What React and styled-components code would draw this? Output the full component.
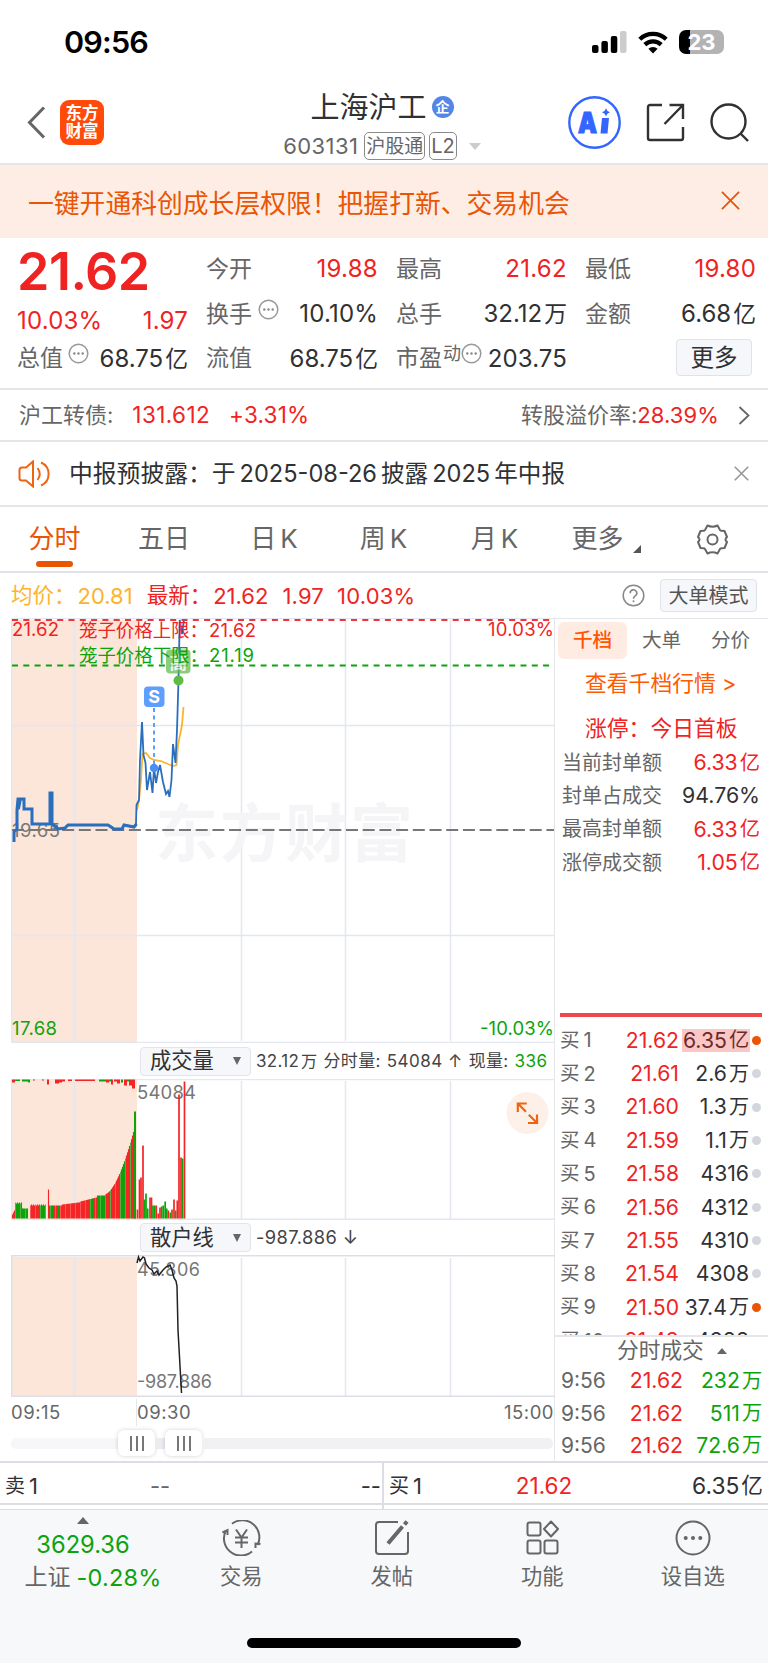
import React from "react";
import styled, { createGlobalStyle } from "styled-components";

const RED = "#f02323";
const GREEN = "#0ca30c";
const ORANGE = "#ea5504";
const LINE = "#e4e6ea";

const GlobalStyle = createGlobalStyle`
  * {
    box-sizing: border-box;
  }
  body {
    margin: 0;
    background: #fff;
    color: #303133;
    font-family: Inter, "Noto Sans CJK SC", sans-serif;
    font-size: 23px;
    line-height: 1;
  }
`;

const Page = styled.div`
  display: flex;
  flex-direction: column;
  width: 768px;
  height: 1663px;
  overflow: hidden;
  white-space: nowrap;
`;

const T = styled.span`
  display: inline-flex;
  align-items: center;
  color: ${(p) => p.$c || "inherit"};
  font-size: ${(p) => p.$s || 23}px;
  font-weight: ${(p) => p.$w || 400};
  letter-spacing: ${(p) => p.$ls || 0}px;
  margin-left: ${(p) => p.$ml || 0}px;
`;

const Unit = styled.span`
  margin-left: 2px;
  font-size: 0.95em;
`;

// number with an optional 万 / 亿 suffix
const Num = ({ children, ...rest }) => {
  const m = String(children).match(/^(.*?)([万亿]?)$/);
  return (
    <T {...rest}>
      {m[1]}
      {m[2] && <Unit>{m[2]}</Unit>}
    </T>
  );
};

/* ---------- status bar ---------- */

const StatusBar = styled.div`
  height: 84px;
  display: flex;
  align-items: center;
  justify-content: space-between;
  padding: 0 44px 0 64px;
`;

const StatusIcons = styled.div`
  display: flex;
  align-items: center;
  gap: 11px;
`;

const Battery = styled.div`
  width: 45px;
  height: 24px;
  border-radius: 7px;
  background: linear-gradient(90deg, #000 24%, #b3b3b3 24%);
  color: #fff;
  font-size: 22px;
  font-weight: 700;
  display: flex;
  align-items: center;
  justify-content: center;
`;

/* ---------- header ---------- */

const Header = styled.div`
  height: 81px;
  display: grid;
  grid-template-columns: 1fr auto 1fr;
  padding: 0 19px 0 27px;
  border-bottom: 2px solid ${LINE};
`;

const HeaderLeft = styled.div`
  display: flex;
  align-items: center;
  gap: 14px;
  padding-bottom: 3px;
`;

const Logo = styled.div`
  width: 44px;
  height: 45px;
  border-radius: 9px;
  background: #ff4a0a;
  color: #fff;
  display: flex;
  flex-direction: column;
  align-items: center;
  justify-content: center;
  font-size: 16.5px;
  font-weight: 700;
  line-height: 18px;
`;

const HeaderCenter = styled.div`
  display: flex;
  flex-direction: column;
  align-items: center;
  padding-right: 12px;
`;

const Title = styled.div`
  display: flex;
  align-items: center;
  gap: 5px;
  height: 46px;
  font-size: 29px;
`;

const Badge = styled.div`
  width: 22px;
  height: 22px;
  border-radius: 50%;
  background: #5486e8;
  color: #fff;
  font-size: 14px;
  font-weight: 700;
  display: flex;
  align-items: center;
  justify-content: center;
`;

const Code = styled.div`
  display: flex;
  align-items: center;
  height: 32px;
  font-size: 22px;
  letter-spacing: 0.4px;
  color: #666;
`;

const Tag = styled.div`
  height: 28px;
  border: 1.5px solid #8a8a8a;
  border-radius: 5px;
  padding: 0 1px;
  margin-left: ${(p) => p.$ml}px;
  font-size: ${(p) => p.$s}px;
  letter-spacing: 0;
  display: flex;
  align-items: center;
`;

const Caret = styled.div`
  border-left: ${(p) => p.$w}px solid transparent;
  border-right: ${(p) => p.$w}px solid transparent;
  border-top: ${(p) => (p.$up ? 0 : p.$h)}px solid ${(p) => p.$c};
  border-bottom: ${(p) => (p.$up ? p.$h : 0)}px solid ${(p) => p.$c};
  margin-left: ${(p) => p.$ml || 0}px;
`;

const HeaderRight = styled.div`
  display: flex;
  align-items: center;
  justify-content: flex-end;
  gap: 25px;
  padding-bottom: 3px;
`;

/* ---------- banner ---------- */

const Banner = styled.div`
  height: 73px;
  background: #fdede4;
  color: ${ORANGE};
  font-size: 25.8px;
  display: flex;
  align-items: center;
  justify-content: space-between;
  padding: 4px 28px 0;
  & svg {
    margin-top: -6px;
  }
`;

/* ---------- quote ---------- */

const Quote = styled.div`
  height: 152px;
  padding: 9px 12px 0 17px;
  display: grid;
  grid-template-columns: 171px 172px 171px 171px;
  gap: 18px;
  border-bottom: 2px solid ${LINE};
`;

const QuoteCol = styled.div`
  display: flex;
  flex-direction: column;
`;

const BigPrice = styled.div`
  height: 50px;
  display: flex;
  align-items: center;
  color: ${RED};
  font-size: 52px;
  font-weight: 600;
  letter-spacing: -0.5px;
`;

const QuoteRow = styled.div`
  height: ${(p) => p.$h || 44.8}px;
  padding-top: ${(p) => p.$pt || 0}px;
  display: flex;
  align-items: center;
  justify-content: space-between;
`;

const Label = styled.div`
  display: flex;
  align-items: center;
  color: #666;
  font-size: 23px;
`;

const Raised = styled.div`
  display: flex;
  align-items: center;
  margin: -10px 0 0 ${(p) => p.$ml || 0}px;
  font-size: 18px;
`;

const MoreButton = styled.div`
  width: 76px;
  height: 37px;
  margin: -3px 4px 0 auto;
  border: 1.5px solid #dfe2e8;
  border-radius: 4px;
  background: #f6f7fa;
  font-size: 23.5px;
  display: flex;
  align-items: center;
  justify-content: center;
`;

const Strip = styled.div`
  height: ${(p) => p.$h}px;
  border-bottom: 2px solid ${LINE};
  display: flex;
  align-items: center;
  padding: 0 ${(p) => p.$pr}px 0 ${(p) => p.$pl}px;
`;

const Spacer = styled.div`
  flex: 1;
`;

/* ---------- tabs ---------- */

const Tabs = styled.div`
  height: 66px;
  border-bottom: 2px solid #e0e2e8;
  display: grid;
  grid-template-columns: 109px 110px 110px 109px 113px 110px 93px;
`;

const Tab = styled.div`
  display: flex;
  flex-direction: column;
  align-items: center;
  justify-content: center;
  position: relative;
  color: ${(p) => (p.$active ? ORANGE : "#666")};
  padding-left: ${(p) => p.$pl || 0}px;
  font-size: 26px;
  &::after {
    content: "";
    display: ${(p) => (p.$active ? "block" : "none")};
    position: absolute;
    bottom: 4px;
    width: 37px;
    height: 6px;
    border-radius: 3px;
    background: ${ORANGE};
  }
`;

const TabLine = styled.div`
  display: flex;
  gap: 4px;
  align-items: center;
`;

const Corner = styled.div`
  border-left: 8px solid transparent;
  border-bottom: 8px solid #555;
  margin: 20px 0 0 5px;
`;

const Summary = styled.div`
  height: 45px;
  padding: 0 11px 0 11px;
  display: flex;
  align-items: center;
`;

const ModeButton = styled.div`
  width: 97px;
  height: 33px;
  margin-left: 15px;
  border: 1.5px solid #dfe2e8;
  border-radius: 4px;
  background: #f6f7fa;
  color: #555;
  font-size: 20px;
  display: flex;
  align-items: center;
  justify-content: center;
`;

/* ---------- body ---------- */

const Body = styled.div`
  height: 845px;
  display: grid;
  grid-template-columns: 555px 213px;
  border-bottom: 2px solid #dcdee6;
`;

const Charts = styled.div`
  padding-left: 11px;
  border-right: 1.5px solid ${LINE};
  display: flex;
  flex-direction: column;
  & > svg {
    display: block;
    flex: none;
  }
`;

const IndicatorRow = styled.div`
  height: ${(p) => p.$h}px;
  padding-left: 129px;
  display: flex;
  align-items: center;
  color: #444;
`;

const Picker = styled.div`
  width: 111px;
  height: 29px;
  border: 1.5px solid #e2e4e9;
  border-radius: 4px;
  background: #f6f7fa;
  color: #303133;
  font-size: 21.3px;
  display: flex;
  align-items: center;
  justify-content: space-between;
  padding: 0 9px 0 9px;
  margin-right: 5px;
`;

const TimeAxis = styled.div`
  height: 30px;
  display: flex;
  align-items: center;
  color: #666;
  font-size: 18.5px;
  letter-spacing: 0.5px;
`;

const AxisStart = styled.div`
  width: 125px;
`;

const AxisMid = styled.div`
  height: 27px;
  border-left: 1.5px solid ${LINE};
  display: flex;
  align-items: center;
  flex: 1;
`;

const SliderRow = styled.div`
  height: 32px;
  display: flex;
  align-items: center;
`;

const Track = styled.div`
  height: 11px;
  width: ${(p) => p.$w}px;
  background: ${(p) => p.$c};
  border-radius: ${(p) => p.$r || 0};
`;

const Handle = styled.div`
  width: 37px;
  height: 26px;
  border-radius: 6px;
  background: #fff;
  box-shadow: 0 0 4px rgba(0, 0, 0, 0.18);
  display: flex;
  align-items: center;
  justify-content: center;
  gap: 4px;
  & i {
    width: 2px;
    height: 15px;
    background: #777;
  }
`;

const Side = styled.div`
  display: flex;
  flex-direction: column;
`;

const SideTabs = styled.div`
  height: 41px;
  padding: 3px 0 0 3px;
  border-top: 1.5px solid ${LINE};
  display: flex;
`;

const SideTab = styled.div`
  width: 69px;
  height: 37px;
  border-radius: 6px;
  background: ${(p) => (p.$active ? "#feece3" : "transparent")};
  color: ${(p) => (p.$active ? "#ff5500" : "#666")};
  font-weight: ${(p) => (p.$active ? 500 : 400)};
  font-size: 19.6px;
  display: flex;
  align-items: center;
  justify-content: center;
`;

const SideTitle = styled.div`
  height: ${(p) => p.$h}px;
  padding: ${(p) => p.$pt || 0}px 0 0 30px;
  color: ${(p) => p.$c};
  font-size: 21.8px;
  display: flex;
  align-items: center;
`;

const FactRow = styled.div`
  height: 33.3px;
  padding: 0 8px 0 7px;
  display: flex;
  align-items: center;
  justify-content: space-between;
  color: #666;
  font-size: 20px;
`;

const RedBar = styled.div`
  height: 3.5px;
  margin: 134px 6px 7px 5px;
  flex: none;
  background: #ee4848;
`;

const Book = styled.div`
  height: 313px;
  flex: none;
  overflow: hidden;
  border-bottom: 2px solid ${LINE};
`;

const BookRow = styled.div`
  height: 33.37px;
  padding-left: 5px;
  display: grid;
  grid-template-columns: 50px 69px 70px 14px;
  align-items: center;
  color: #666;
`;

const Right = styled.div`
  display: flex;
  justify-content: flex-end;
  color: ${(p) => p.$c || "inherit"};
`;

const Highlight = styled.div`
  background: #fbc6c6;
  color: #6b2a2a;
  padding: 0 1px;
  height: 23px;
  display: flex;
  align-items: center;
  margin-right: -1px;
`;

const Dot = styled.div`
  width: 9px;
  height: 9px;
  border-radius: 50%;
  justify-self: center;
  background: ${(p) => (p.$hot ? "#ea5504" : "#d3d6de")};
`;

const DealTitle = styled.div`
  height: 28px;
  display: flex;
  align-items: center;
  color: #666;
  font-size: 21.7px;
  padding-left: 62px;
`;

const DealRow = styled.div`
  height: 32.3px;
  padding-left: 6px;
  display: grid;
  grid-template-columns: 50px 72px 79px;
  align-items: center;
  color: #666;
`;

/* ---------- bottom ---------- */

const Order = styled.div`
  height: 42px;
  display: grid;
  grid-template-columns: 384px 384px;
  border-bottom: 2px solid #dcdee6;
`;

const OrderCell = styled.div`
  display: grid;
  grid-template-columns: 105px 100px 1fr;
  align-items: center;
  padding: 6px ${(p) => p.$pr}px 0 5px;
  border-right: ${(p) => (p.$line ? "2px solid #dcdee6" : "none")};
  & > :nth-child(2) {
    justify-content: center;
  }
  & > :nth-child(3) {
    justify-content: flex-end;
  }
`;

const OrderEdge = styled.div`
  height: 5px;
  display: grid;
  grid-template-columns: 384px 384px;
  border-bottom: 1.5px solid #dcdee6;
  & > :first-child {
    border-right: 2px solid #dcdee6;
  }
`;

const Nav = styled.div`
  flex: 1;
  background: #f7f8fa;
  display: grid;
  grid-template-columns: 166px repeat(4, 150.5px);
  grid-template-rows: 128px auto;
`;

const NavItem = styled.div`
  display: flex;
  flex-direction: column;
  align-items: center;
  padding-top: 10px;
  gap: 10px;
  color: #666;
  font-size: 21.3px;
`;

const IndexItem = styled.div`
  display: flex;
  flex-direction: column;
  align-items: center;
  padding-top: 7px;
  gap: 9px;
`;

const HomeBar = styled.div`
  grid-column: 1 / -1;
  width: 274px;
  height: 10px;
  border-radius: 5px;
  background: #000;
  justify-self: center;
`;

/* ---------- icons ---------- */

const Cross = ({ size, color, w }) => (
  <svg width={size} height={size} viewBox="0 0 20 20">
    <path d="M1 1 19 19M19 1 1 19" stroke={color} strokeWidth={w} />
  </svg>
);

const MoreDots = () => (
  <svg width="21" height="21" viewBox="0 0 21 21">
    <circle cx="10.5" cy="10.5" r="9.3" fill="none" stroke="#999" strokeWidth="1.5" />
    <circle cx="6.3" cy="10.5" r="1.2" fill="#888" />
    <circle cx="10.5" cy="10.5" r="1.2" fill="#888" />
    <circle cx="14.7" cy="10.5" r="1.2" fill="#888" />
  </svg>
);

const Signal = () => (
  <svg width="35" height="22" viewBox="0 0 35 22">
    <rect x="0" y="14" width="6.5" height="8" rx="2" />
    <rect x="9.4" y="10" width="6.5" height="12" rx="2" />
    <rect x="18.8" y="5" width="6.5" height="17" rx="2" />
    <rect x="28" y="0" width="6.5" height="22" rx="2" fill="#ccc" />
  </svg>
);

const Wifi = () => (
  <svg width="30" height="23" viewBox="0 0 30 23" fill="none" stroke="#000" strokeWidth="4.2">
    <path d="M1.8 8.2a19 19 0 0 1 26.4 0" />
    <path d="M6.8 13.6a12 12 0 0 1 16.4 0" />
    <path d="M15 22.6l-4.6-4.8a6.6 6.6 0 0 1 9.2 0z" fill="#000" stroke="none" />
  </svg>
);

const AiIcon = () => (
  <svg width="53" height="53" viewBox="0 0 53 53">
    <circle cx="26.5" cy="26.5" r="25.2" fill="none" stroke="#3366ff" strokeWidth="2.4" />
    <text x="10" y="36.5" fontSize="29" fontWeight="900" fill="#3366ff" stroke="#3366ff" strokeWidth="1.2" textLength="19" lengthAdjust="spacingAndGlyphs">
      A
    </text>
    <path d="M34 22h7l-1.500 15.500h-7z" fill="#3366ff" />
    <path d="M38 12.200q.8 3.200 4 4-3.200.8-4 4-.8-3.200-4-4 3.200-.8 4-4z" fill="#3366ff" />
  </svg>
);

const ShareIcon = () => (
  <svg width="39" height="39" viewBox="0 0 39 39" fill="none" stroke="#303133" strokeWidth="2.4">
    <path d="M16 2H4a2 2 0 0 0-2 2v31a2 2 0 0 0 2 2h31a2 2 0 0 0 2-2V24" />
    <path d="M23.500 2H37v14M37 2 18.500 21" />
  </svg>
);

const SearchIcon = () => (
  <svg width="39" height="39" viewBox="0 0 39 39" fill="none" stroke="#303133" strokeWidth="2.4">
    <circle cx="18.5" cy="18.5" r="17" />
    <path d="M30.5 30.5 38 38" />
  </svg>
);

const Speaker = () => (
  <svg width="33" height="28" viewBox="0 0 33 28" fill="none" stroke="#f0640f" strokeWidth="2">
    <path d="M15 1.5 8 7.5H4a2.5 2.5 0 0 0-2.5 2.5v8A2.5 2.5 0 0 0 4 20.5h4l7 6z" />
    <path d="M19.5 8q4.500 6 0 12M23 2.5a12.500 12.500 0 0 1 0 23" />
  </svg>
);

const Gear = () => (
  <svg width="31" height="31" viewBox="0 0 31 31" fill="none" stroke="#666" strokeWidth="2" strokeLinejoin="round">
    <path d="M10.500 1.500q5 2.500 10 0l2.500 4.500q.5.8 1.500.8l3 .2 2.500 6q-3 2.500 0 5l-2.500 6-3 .2q-1 0-1.500.8l-2.500 4.500q-5-2.500-10 0l-2.500-4.500q-.5-.8-1.500-.8l-3-.2-2.500-6q3-2.500 0-5l2.500-6 3-.2q1 0 1.500-.8z" />
    <circle cx="15.5" cy="15.5" r="5" />
  </svg>
);

const Question = () => (
  <svg width="23" height="23" viewBox="0 0 23 23">
    <circle cx="11.5" cy="11.5" r="10.3" fill="none" stroke="#888" strokeWidth="1.5" />
    <path d="M8.200 9.200a3.300 3.300 0 1 1 5 2.700q-1.700 1-1.700 2.800" fill="none" stroke="#888" strokeWidth="1.6" />
    <circle cx="11.5" cy="17.3" r="1" fill="#888" />
  </svg>
);

const TradeIcon = () => (
  <svg width="41" height="36" viewBox="0 0 41 36" fill="none" stroke="#666" strokeWidth="2">
    <path d="M11 3.800A17 17 0 0 1 36.500 25" />
    <path d="M34.500 28v-4.500l5 .5" />
    <path d="M31 31.500A17 17 0 0 1 5 10.500" />
    <path d="M1.500 12.500l5-2.500v5" />
    <path d="M15 9.500l5.500 8 5.500-8M20.500 17.500V28M14 17.500h13M14 22.500h13" />
  </svg>
);

const PostIcon = () => (
  <svg width="36" height="36" viewBox="0 0 36 36" fill="none" stroke="#666" strokeWidth="2">
    <path d="M24 2H5a3 3 0 0 0-3 3v26a3 3 0 0 0 3 3h26a3 3 0 0 0 3-3V12" />
    <path d="M14 23.5 28.5 6.5M30.5 4.5l2.500-3" strokeWidth="4" />
  </svg>
);

const GridIcon = () => (
  <svg width="33" height="36" viewBox="0 0 33 36" fill="none" stroke="#666" strokeWidth="2">
    <rect x="1.5" y="2.5" width="13" height="13" rx="2" />
    <rect x="1.5" y="20.5" width="13" height="13" rx="2" />
    <rect x="18.5" y="20.5" width="13" height="13" rx="2" />
    <path d="M25 1.500l7 7.500-7 7.500-7-7.500z" strokeLinejoin="round" />
  </svg>
);

const EllipsisIcon = () => (
  <svg width="36" height="36" viewBox="0 0 36 36">
    <circle cx="18" cy="18" r="16.5" fill="none" stroke="#666" strokeWidth="2" />
    <circle cx="10.7" cy="18" r="2" fill="#666" />
    <circle cx="18" cy="18" r="2" fill="#666" />
    <circle cx="25.3" cy="18" r="2" fill="#666" />
  </svg>
);

/* ---------- charts ---------- */

const PRICE =
  "14,842 14,832 17,829 17,810 18,809 18,799 19,799 19,809 21,799 24,799 24,809 32,809 32,824 50,824 50,793 52,793 52,824 57,826 58,829 65,828 68,825 108,825 112,827 114,829 122,829 124,825 134,827 136,824 136.5,805 139,800 140,760 142,722 143.5,755 145.5,763 147,790 150,772 152.5,793 154,768 156,783 158,772 160,765 163,782 166,794 168,791 169.5,797 171.5,780 173,744 175.5,763 177,730 178.5,680 179.7,620 182,634 184,620";
// the auction part before 09:30 is drawn thicker
const AUCTION =
  "14,842 14,832 17,829 17,810 18,799 24,799 24,809 32,809 32,824 50,824 50,793 52,793 52,824 58,829 65,828 68,825 108,825 114,829 122,829 124,825 134,827 136.5,824";
const AVERAGE =
  "137,810 139,800 141,780 142.5,754 146,753 150,758 154,760 161,761 168,764 173,766 176.5,765 178,745 182,725 183.5,707";
const RETAIL =
  "137,1263 138.5,1257 140,1261 143,1257 144.5,1258 146,1264 149,1268 152,1270 154,1274 157,1271 159,1275 163,1270 166,1267 170,1265 172,1270 174,1278 176,1281 177,1286 178,1330 181.5,1393";

const grid = [74.5, 241.5, 345.5, 450.5];

const PriceChart = () => (
  <svg width="544" height="425" viewBox="11 618 544 425">
    <rect x="12" y="620" width="125" height="423" fill="#fce5d9" />
    <g stroke="#e4e6f0" strokeWidth="1.5">
      {grid.map((x) => (
        <path key={x} d={`M${x} 620V1041`} />
      ))}
      <path d="M12 725.5H554M12 935.5H554M11.7 618V1042M11 618.5H555M11 1042.5H555" />
    </g>
    <text x="155" y="855.5" fontSize="63" fontWeight="700" fill="#f5f5f7" textLength="258">
      东方财富
    </text>
    <text x="12" y="836.5" fontSize="18.5" fill="#777" textLength="48">
      19.65
    </text>
    <path d="M12 830H554" stroke="#777" strokeWidth="2" strokeDasharray="12 4.7" />
    <path d="M12 620H554" stroke="#f0343a" strokeWidth="2" strokeDasharray="6 5.3" />
    <path d="M12 665.5H554" stroke={GREEN} strokeWidth="2" strokeDasharray="6 5.3" />
    <polyline points={AVERAGE} fill="none" stroke="#fcb42e" strokeWidth="1.8" />
    <polyline points={PRICE} fill="none" stroke="#2a6fbd" strokeWidth="1.8" />
    <polyline points={AUCTION} fill="none" stroke="#2a6fbd" strokeWidth="3" />
    <g opacity="0.75">
      <rect x="166" y="649.5" width="24.5" height="24" rx="4" fill="#66bb50" />
      <text x="169.5" y="669" fontSize="17.5" fontWeight="700" fill="#e9f6e5">
        高
      </text>
    </g>
    <circle cx="178.5" cy="680.5" r="5" fill="#5ebb46" />
    <path d="M154 708V764" stroke="#5f9ffb" strokeWidth="2" strokeDasharray="4 3.5" />
    <rect x="144" y="686.5" width="20.5" height="20.5" rx="4" fill="#5f9ffb" />
    <text x="154.2" y="703" fontSize="18" fontWeight="700" fill="#fff" textAnchor="middle">
      S
    </text>
    <circle cx="154" cy="768" r="4.2" fill="#4b8df5" />
    <g fontSize="18.5">
      <g fill={RED}>
        <text x="12" y="635.5" textLength="47">21.62</text>
        <text x="79" y="637" textLength="129">笼子价格上限：</text>
        <text x="209" y="637" textLength="47">21.62</text>
        <text x="554" y="635.5" textAnchor="end" textLength="66">10.03%</text>
      </g>
      <g fill={GREEN}>
        <text x="79" y="661.5" textLength="129">笼子价格下限：</text>
        <text x="209" y="661.5" textLength="45">21.19</text>
        <text x="12" y="1035" textLength="45">17.68</text>
        <text x="554" y="1035" textAnchor="end" textLength="74">-10.03%</text>
      </g>
    </g>
  </svg>
);

const auctionHeight = (x) => {
  if (x < 15) return 4 + (x - 12) * 2;
  if (x < 22) return 15 + (x % 2);
  if (x < 29) return 10;
  if (x < 46) return 13 + (x % 2);
  if (x === 48) return 29;
  if (x < 62) return 13;
  if (x < 80) return 14 + (x - 62) / 8;
  if (x < 97) return 17 + (x - 80) / 4;
  if (x < 105) return 23;
  return 24 + Math.pow((x - 104) / 31, 1.7) * 70;
};

const bars = [];
for (let x = 12; x < 136; x += 1) {
  if (x === 28 || x === 29 || x === 46 || x === 47) continue;
  const green =
    (x > 14 && x < 28) || (x > 38 && x < 45) || (x > 49 && x < 54) || x === 58 ||
    (x > 88 && x < 94) || (x > 96 && x < 105) || x === 110 || (x > 119 && x < 125 && x % 2 === 0) || x === 130;
  bars.push({ x: x + 0.5, h: auctionHeight(x), c: green ? GREEN : "#f52525", w: x % 5 === 0 ? 0.7 : 1.1 });
}
bars.push({ x: 135, h: 107, c: GREEN, w: 2 });

[
  [137.5, 9, 0], [139.5, 39, 0], [141, 41, 0], [143, 73, 0], [144.5, 19, 1], [146, 25, 1], [147.7, 10, 1],
  [150, 21, 0], [151.5, 21, 0], [153, 13, 1], [154.7, 13, 1], [156.3, 13, 0], [158.3, 5, 0], [160, 11, 0],
  [161.7, 12, 1], [163.3, 13, 1], [165.2, 17, 1], [166.7, 10, 1], [168.3, 8, 0], [170.3, 6, 1], [172, 9, 0],
  [174, 19, 0], [175.6, 8, 1], [177.3, 18, 0], [179, 124, 0], [181, 61, 0], [182.6, 60, 1], [184.5, 137, 0],
].forEach(([x, h, g]) => bars.push({ x, h, c: g ? GREEN : "#f52525", w: 1.7 }));

// auction imbalance, hanging from the top edge
const hanging = [
  [12, 3, 0, 3], [15, 1.5, 1, 5], [22, 2, 1, 6], [28, 3, 1, 2], [33, 1, 0, 2], [42, 1, 0, 2], [47, 5, 0, 2],
  [55, 4, 0, 4], [59, 3, 0, 3], [62, 2, 0, 3], [68, 1.5, 0, 4], [75, 1.5, 0, 20], [99, 2, 1, 7], [106, 3, 0, 3],
  [109, 2, 1, 3], [111, 5, 0, 2], [114, 2, 0, 3], [117, 4, 0, 3], [121, 3, 1, 2], [124, 6, 0, 3], [127, 2, 1, 2], [129, 6, 0, 3], [132, 9, 0, 3],
];

const VolumeChart = () => (
  <svg width="544" height="141" viewBox="11 1079 544 141">
    <rect x="12" y="1080" width="125" height="139" fill="#fce5d9" />
    <g stroke="#e4e6f0" strokeWidth="1.5">
      {grid.map((x) => (
        <path key={x} d={`M${x} 1081V1219`} />
      ))}
      <path d="M11 1079.5H555M11 1219.3H555M11.7 1079V1219" />
    </g>
    {hanging.map(([x, h, g, w]) => (
      <rect key={x} x={x} y="1079.5" width={w} height={h} fill={g ? GREEN : "#f52525"} />
    ))}
    <text x="137" y="1099" fontSize="18.5" fill="#777" textLength="59">
      54084
    </text>
    {bars.map((b, i) => (
      <rect key={i} x={b.x - b.w / 2} y={1218.5 - b.h} width={b.w} height={b.h} fill={b.c} />
    ))}
    <circle cx="527.5" cy="1113" r="21" fill="#fdf0e9" />
    <path d="M517.8 1112v-8.500h9M518 1103.7l8 8M537 1114.5v8.500h-9M536.8 1122.8l-8-8" fill="none" stroke="#f0640f" strokeWidth="2.2" />
  </svg>
);

const RetailChart = () => (
  <svg width="544" height="142" viewBox="11 1255 544 142">
    <rect x="12" y="1257" width="125" height="139" fill="#fce5d9" />
    <g stroke="#e4e6f0" strokeWidth="1.5">
      {grid.map((x) => (
        <path key={x} d={`M${x} 1258V1396`} />
      ))}
      <path d="M11 1255.8H555M11 1396.3H555M11.7 1256V1396" stroke="#dcdfe6" />
    </g>
    <g fontSize="18" fill="#777">
      <text x="137" y="1275.5" textLength="63">45.806</text>
      <text x="137" y="1387.5" textLength="75">-987.886</text>
    </g>
    <polyline points={RETAIL} fill="none" stroke="#222" strokeWidth="1.5" />
  </svg>
);

/* ---------- data ---------- */

const facts = [
  ["当前封单额", "6.33亿", RED],
  ["封单占成交", "94.76%", "#303133"],
  ["最高封单额", "6.33亿", RED],
  ["涨停成交额", "1.05亿", RED],
];

const book = [
  [1, "21.62", "6.35亿", true],
  [2, "21.61", "2.6万"],
  [3, "21.60", "1.3万"],
  [4, "21.59", "1.1万"],
  [5, "21.58", "4316"],
  [6, "21.56", "4312"],
  [7, "21.55", "4310"],
  [8, "21.54", "4308"],
  [9, "21.50", "37.4万", true],
  [10, "21.49", "4988"],
];

const deals = ["232万", "511万", "72.6万"];

const navItems = [
  ["交易", TradeIcon],
  ["发帖", PostIcon],
  ["功能", GridIcon],
  ["设自选", EllipsisIcon],
];

const App = () => {
  return (
    <Page>
      <GlobalStyle />
      <StatusBar>
        <T $s={30.5} $w={600} $ls={-0.8} $c="#000">09:56</T>
        <StatusIcons>
          <Signal />
          <Wifi />
          <Battery>23</Battery>
        </StatusIcons>
      </StatusBar>

      <Header>
        <HeaderLeft>
          <svg width="19" height="33" viewBox="0 0 19 33">
            <path d="M17 1.5 2.5 16.5 17 31.5" fill="none" stroke="#666" strokeWidth="3" />
          </svg>
          <Logo>
            <span>东方</span>
            <span>财富</span>
          </Logo>
        </HeaderLeft>
        <HeaderCenter>
          <Title>
            上海沪工<Badge>企</Badge>
          </Title>
          <Code>
            603131
            <Tag $ml={6} $s={19}>沪股通</Tag>
            <Tag $ml={4} $s={20}>L2</Tag>
            <Caret $w={6} $h={7} $c="#ccc" $ml={12} />
          </Code>
        </HeaderCenter>
        <HeaderRight>
          <AiIcon />
          <ShareIcon />
          <SearchIcon />
        </HeaderRight>
      </Header>

      <Banner>
        一键开通科创成长层权限！把握打新、交易机会
        <Cross size={19} color={ORANGE} w={1.9} />
      </Banner>

      <Quote>
        <QuoteCol>
          <BigPrice>21.62</BigPrice>
          <QuoteRow $h={39.6} $pt={8}>
            <T $s={24} $ls={0.2} $c={RED}>10.03%</T>
            <T $s={24} $ls={0.2} $c={RED}>1.97</T>
          </QuoteRow>
          <QuoteRow>
            <Label>总值<Raised $ml={5}><MoreDots /></Raised></Label>
            <Num $s={24}>68.75亿</Num>
          </QuoteRow>
        </QuoteCol>
        <QuoteCol>
          <QuoteRow>
            <Label>今开</Label>
            <T $s={24} $ls={0.3} $c={RED}>19.88</T>
          </QuoteRow>
          <QuoteRow>
            <Label>换手<Raised $ml={6}><MoreDots /></Raised></Label>
            <T $s={24} $ls={0.2}>10.10%</T>
          </QuoteRow>
          <QuoteRow>
            <Label>流值</Label>
            <Num $s={24}>68.75亿</Num>
          </QuoteRow>
        </QuoteCol>
        <QuoteCol>
          <QuoteRow>
            <Label>最高</Label>
            <T $s={24} $ls={0.3} $c={RED}>21.62</T>
          </QuoteRow>
          <QuoteRow>
            <Label>总手</Label>
            <Num $s={24}>32.12万</Num>
          </QuoteRow>
          <QuoteRow>
            <Label>市盈<Raised $ml={1}>动<MoreDots /></Raised></Label>
            <T $s={24} $ls={0.1}>203.75</T>
          </QuoteRow>
        </QuoteCol>
        <QuoteCol>
          <QuoteRow>
            <Label>最低</Label>
            <T $s={24} $ls={0.2} $c={RED}>19.80</T>
          </QuoteRow>
          <QuoteRow>
            <Label>金额</Label>
            <Num $s={24}>6.68亿</Num>
          </QuoteRow>
          <QuoteRow>
            <MoreButton>更多</MoreButton>
          </QuoteRow>
        </QuoteCol>
      </Quote>

      <Strip $h={52} $pl={19} $pr={18}>
        <T $s={22} $c="#666">沪工转债:</T>
        <T $s={22.5} $ls={0.4} $c={RED} $ml={19}>131.612</T>
        <T $s={22.5} $ls={0.2} $c={RED} $ml={19}>+3.31%</T>
        <Spacer />
        <T $s={22} $c="#666">转股溢价率:</T>
        <T $s={22} $ls={0.1} $c={RED}>28.39%</T>
        <T $ml={19}>
          <svg width="12" height="19" viewBox="0 0 12 19">
            <path d="M1.5 1 10.5 9.5 1.5 18" fill="none" stroke="#666" strokeWidth="1.8" />
          </svg>
        </T>
      </Strip>

      <Strip $h={65} $pl={18} $pr={19}>
        <Speaker />
        <T $ml={18} $s={23.8}>中报预披露：于</T>
        <T $ml={4} $s={23.6}>2025-08-26</T>
        <T $ml={4} $s={23.6}>披露</T>
        <T $ml={4} $s={23.6}>2025</T>
        <T $ml={4} $s={23.6}>年中报</T>
        <Spacer />
        <Cross size={15} color="#999" w={2.2} />
      </Strip>

      <Tabs>
        <Tab $active>分时</Tab>
        <Tab>五日</Tab>
        <Tab><TabLine>日<span>K</span></TabLine></Tab>
        <Tab><TabLine>周<span>K</span></TabLine></Tab>
        <Tab><TabLine>月<span>K</span></TabLine></Tab>
        <Tab><TabLine>更多<Corner /></TabLine></Tab>
        <Tab $pl={10}><Gear /></Tab>
      </Tabs>

      <Summary>
        <T $s={21.5} $c="#fcb42e">均价：</T>
        <T $s={22} $c="#fcb42e" $ml={2}>20.81</T>
        <T $s={21.5} $c={RED} $ml={14}>最新：</T>
        <T $s={22} $c={RED} $ml={2}>21.62</T>
        <T $s={22} $ls={0.2} $c={RED} $ml={14}>1.97</T>
        <T $s={22} $ls={0.2} $c={RED} $ml={13}>10.03%</T>
        <Spacer />
        <Question />
        <ModeButton>大单模式</ModeButton>
      </Summary>

      <Body>
        <Charts>
          <PriceChart />
          <IndicatorRow $h={36}>
            <Picker>成交量<Caret $w={4.5} $h={8} $c="#666" /></Picker>
            <Num $s={17} $ls={0.3}>32.12万</Num>
            <T $s={17} $ls={0.3} $ml={6}>分时量:</T>
            <T $s={17} $ls={0.5} $ml={6}>54084 ↑</T>
            <T $s={17} $ls={0.3} $ml={6}>现量:</T>
            <T $s={17} $ls={0.5} $ml={6} $c={GREEN}>336</T>
          </IndicatorRow>
          <VolumeChart />
          <IndicatorRow $h={35}>
            <Picker>散户线<Caret $w={4.5} $h={8} $c="#666" /></Picker>
            <T $s={18.3} $ls={0.4}>-987.886 ↓</T>
          </IndicatorRow>
          <RetailChart />
          <TimeAxis>
            <AxisStart>09:15</AxisStart>
            <AxisMid>09:30</AxisMid>
            15:00
          </TimeAxis>
          <SliderRow>
            <Track $w={107} $c="#f7f7f9" $r="5px 0 0 5px" />
            <Handle><i /><i /><i /></Handle>
            <Track $w={10} $c="#ebecf0" />
            <Handle><i /><i /><i /></Handle>
            <Track $w={351} $c="#f1f1f4" $r="0 5px 5px 0" />
          </SliderRow>
        </Charts>

        <Side>
          <SideTabs>
            <SideTab $active>千档</SideTab>
            <SideTab>大单</SideTab>
            <SideTab>分价</SideTab>
          </SideTabs>
          <SideTitle $h={49} $c="#ff5a00">查看千档行情 &gt;</SideTitle>
          <SideTitle $h={38} $pt={3} $c={RED}>涨停：今日首板</SideTitle>
          {facts.map(([name, value, color]) => (
            <FactRow key={name}>
              {name}
              <Num $s={21.3} $c={color}>{value}</Num>
            </FactRow>
          ))}
          <RedBar />
          <Book>
            {book.map(([level, price, vol, hot]) => (
              <BookRow key={level}>
                <T $s={19.5}>买<T $s={20} $ml={4}>{level}</T></T>
                <Right><T $s={21.2} $c={RED}>{price}</T></Right>
                <Right $c="#303133">
                  {level === 1 ? (
                    <Highlight><Num $s={21.2}>{vol}</Num></Highlight>
                  ) : (
                    <Num $s={21.2}>{vol}</Num>
                  )}
                </Right>
                <Dot $hot={hot} />
              </BookRow>
            ))}
          </Book>
          <DealTitle>
            分时成交
            <Caret $up $w={5} $h={6} $c="#666" $ml={13} />
          </DealTitle>
          {deals.map((d) => (
            <DealRow key={d}>
              <T $s={21}>9:56</T>
              <Right><T $s={21.2} $c={RED}>21.62</T></Right>
              <Right><Num $s={21.2} $c={GREEN}>{d}</Num></Right>
            </DealRow>
          ))}
        </Side>
      </Body>

      <Order>
        <OrderCell $line $pr={1}>
          <T $s={20}>卖<T $s={22} $ml={4}>1</T></T>
          <T $s={22} $c="#666">--</T>
          <T $s={22}>--</T>
        </OrderCell>
        <OrderCell $pr={5}>
          <T $s={20}>买<T $s={22} $ml={4}>1</T></T>
          <T $s={22.5} $c={RED}>21.62</T>
          <Num $s={22.8}>6.35亿</Num>
        </OrderCell>
      </Order>
      <OrderEdge>
        <div />
        <div />
      </OrderEdge>

      <Nav>
        <IndexItem>
          <Caret $up $w={6.5} $h={7} $c="#666" />
          <T $s={23.7} $c={GREEN}>3629.36</T>
          <T $s={23} $c="#666" $ml={20}>
            上证<T $s={23.5} $ls={0.2} $c={GREEN} $ml={6}>-0.28%</T>
          </T>
        </IndexItem>
        {navItems.map(([name, Icon]) => (
          <NavItem key={name}>
            <Icon />
            {name}
          </NavItem>
        ))}
        <HomeBar />
      </Nav>
    </Page>
  );
};

export default App;
